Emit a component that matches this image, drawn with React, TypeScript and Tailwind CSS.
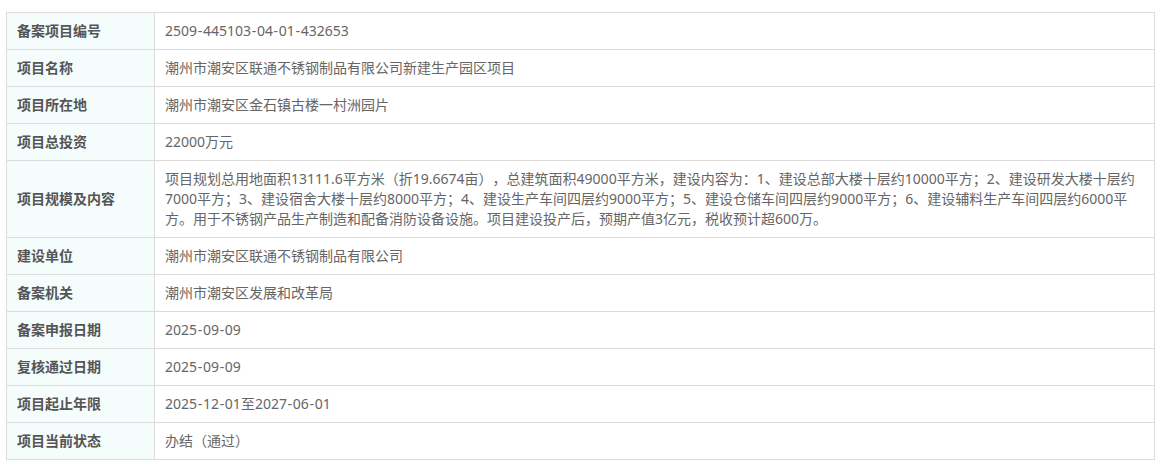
import React from "react";

function h(s: string): React.ReactNode {
  const parts = s.split("-");
  return parts.map((p, i) => (
    <React.Fragment key={i}>
      {i > 0 && <span className="mx-[0.7px]">-</span>}
      {p}
    </React.Fragment>
  ));
}

const rows: [string, React.ReactNode][] = [
  ["备案项目编号", h("2509-445103-04-01-432653")],
  ["项目名称", "潮州市潮安区联通不锈钢制品有限公司新建生产园区项目"],
  ["项目所在地", "潮州市潮安区金石镇古楼一村洲园片"],
  ["项目总投资", "22000万元"],
  [
    "项目规模及内容",
    <>
      项目规划总用地面积13111.6平方米（折19.6674亩），总建筑面积49000平方米，建设内容为：1、建设总部大楼十层约10000平方；2、建设研发大楼十层约
      <br />
      7000平方；3、建设宿舍大楼十层约8000平方；4、建设生产车间四层约9000平方；5、建设仓储车间四层约9000平方；6、建设辅料生产车间四层约6000平
      <br />
      方。用于不锈钢产品生产制造和配备消防设备设施。项目建设投产后，预期产值3亿元，税收预计超600万。
    </>,
  ],
  ["建设单位", "潮州市潮安区联通不锈钢制品有限公司"],
  ["备案机关", "潮州市潮安区发展和改革局"],
  ["备案申报日期", h("2025-09-09")],
  ["复核通过日期", h("2025-09-09")],
  ["项目起止年限", h("2025-12-01至2027-06-01")],
  ["项目当前状态", "办结（通过）"],
];

export default function App() {
  return (
    <div
      className="w-[1163px] h-[468px] bg-white pt-[12px] pl-[6px] [text-spacing-trim:space-all]"
      style={{ fontFamily: '"Noto Sans", "Noto Sans CJK SC", sans-serif' }}
    >
      <div className="w-[1149px] border border-[#dcdcdc] text-[14px] leading-[20px]">
        {rows.map(([k, v], i) => (
          <div
            key={i}
            className={`grid grid-cols-[148px_1fr] ${i > 0 ? "border-t border-[#dcdcdc]" : ""}`}
          >
            <div className="bg-[#f4fcfc] border-r border-[#dcdcdc] px-[10px] py-[8px] font-bold text-[#555555] flex items-center">
              {k}
            </div>
            <div className="px-[10px] py-[8px] text-[#666666] whitespace-nowrap">{v}</div>
          </div>
        ))}
      </div>
    </div>
  );
}
